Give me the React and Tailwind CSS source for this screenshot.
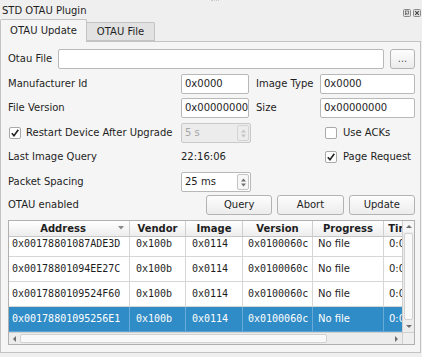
import React from "react";

const rows = [
  ["0x00178801087ADE3D", "0x100b", "0x0114", "0x0100060c", "No file", "0:00:00"],
  ["0x00178801094EE27C", "0x100b", "0x0114", "0x0100060c", "No file", "0:00:00"],
  ["0x0017880109524F60", "0x100b", "0x0114", "0x0100060c", "No file", "0:00:00"],
  ["0x00178801095256E1", "0x100b", "0x0114", "0x0100060c", "No file", "0:00:00"],
];

const colW = ["w-[121px]", "w-[56px]", "w-[57px]", "w-[70px]", "w-[71px]", "w-[36px]"];
const colPad = ["pl-[3px]", "pl-[6px]", "pl-[6px]", "pl-[5px]", "pl-[5px]", "pl-[5px]"];
const mono = [true, true, true, true, false, false];

const Input = ({ value, className = "" }) => (
  <div
    className={`h-[20px] bg-white border border-[#b8b8b8] rounded-[2px] px-[3px] flex items-center overflow-hidden whitespace-nowrap ${className}`}
  >
    {value}
  </div>
);

const Button = ({ children, className = "" }) => (
  <div
    className={`h-[20px] flex items-center justify-center border border-[#b3b3b3] rounded-[3px] bg-gradient-to-b from-[#fdfdfd] to-[#ececec] ${className}`}
  >
    {children}
  </div>
);

const Check = ({ checked }) => (
  <span className="w-[12px] h-[12px] bg-white border border-[#a9a9a9] rounded-[2px] flex items-center justify-center shrink-0">
    {checked && (
      <svg width="10" height="10" viewBox="0 0 10 10">
        <path d="M1.8 5.2 L4 7.8 L8.3 1.8" fill="none" stroke="#222" strokeWidth="1.6" />
      </svg>
    )}
  </span>
);

const Arrow = ({ dir, color = "#6e6e6e" }) => {
  const d = {
    up: "M0 4 L3 1 L6 4 Z",
    down: "M0 1 L3 4 L6 1 Z",
    left: "M4 0 L1 3 L4 6 Z",
    right: "M1 0 L4 3 L1 6 Z",
  }[dir];
  return (
    <svg width="6" height="6" viewBox="0 0 6 6">
      <path d={d} fill={color} />
    </svg>
  );
};

const Spin = ({ value, disabled }) => (
  <div
    className={`w-[70px] h-[20px] flex border rounded-[2px] ${
      disabled
        ? "border-[#c9c9c9] bg-[#ececec] text-[#a6a6a6]"
        : "border-[#b8b8b8] bg-white"
    }`}
  >
    <div className="flex-1 px-[3px] flex items-center whitespace-nowrap">{value}</div>
    <div
      className={`w-[12px] my-[1px] mr-[1px] flex flex-col items-center justify-center border rounded-[2px] ${
        disabled ? "border-[#d4d4d4]" : "border-[#c4c4c4] bg-[#f7f7f7]"
      }`}
    >
      <div className="h-[8px] flex items-end">
        <svg width="5" height="4" viewBox="0 0 5 4">
          <path d="M0 3.5 L2.5 0.5 L5 3.5 Z" fill={disabled ? "#c4c4c4" : "#707070"} />
        </svg>
      </div>
      <div className="h-[8px] flex items-start pt-[1px]">
        <svg width="5" height="4" viewBox="0 0 5 4">
          <path d="M0 0.5 L2.5 3.5 L5 0.5 Z" fill={disabled ? "#c4c4c4" : "#707070"} />
        </svg>
      </div>
    </div>
  </div>
);

const Table = () => (
  <div className="mt-[5px] h-[125px] border border-[#b0b0b0] bg-white flex flex-col">
    <div className="flex flex-1 min-h-0">
      <div className="flex-1 min-w-0 flex flex-col overflow-hidden">
        <div className="h-[16px] flex shrink-0 font-bold bg-gradient-to-b from-[#ffffff] to-[#ededed] border-b border-[#c6c6c6] whitespace-nowrap">
          <div className={`${colW[0]} shrink-0 relative flex items-center justify-center pr-[12px] border-r border-[#cfcfcf]`}>
            Address
            <span className="absolute right-[5px] top-[5px]">
              <svg width="6" height="4" viewBox="0 0 6 4">
                <path d="M0 0 L6 0 L3 3.5 Z" fill="#8a8a8a" />
              </svg>
            </span>
          </div>
          <div className={`${colW[1]} shrink-0 flex items-center justify-center border-r border-[#cfcfcf]`}>Vendor</div>
          <div className={`${colW[2]} shrink-0 flex items-center justify-center border-r border-[#cfcfcf]`}>Image</div>
          <div className={`${colW[3]} shrink-0 flex items-center justify-center border-r border-[#cfcfcf]`}>Version</div>
          <div className={`${colW[4]} shrink-0 flex items-center justify-center border-r border-[#cfcfcf]`}>Progress</div>
          <div className={`${colW[5]} shrink-0 flex items-center justify-center`}>Time</div>
        </div>
        <div className="flex-1 overflow-hidden">
          <div className="-mt-[5px]">
            {rows.map((r, i) => {
              const sel = i === 3;
              return (
                <div
                  key={i}
                  className={`h-[25px] flex whitespace-nowrap border-b ${
                    sel ? "bg-[#308cc6] text-white border-[#5fa5d3]" : "border-[#d6d6d6]"
                  }`}
                >
                  {r.map((c, j) => (
                    <div
                      key={j}
                      className={`${colW[j]} ${colPad[j]} shrink-0 flex items-center overflow-hidden border-r ${
                        sel ? "border-[#6aaad6]" : "border-[#d6d6d6]"
                      } ${mono[j] ? "font-['DejaVu_Sans_Mono',monospace]" : ""}`}
                    >
                      {c}
                    </div>
                  ))}
                </div>
              );
            })}
          </div>
        </div>
      </div>
      <div className="w-[12px] shrink-0 border-l border-[#cfcfcf] bg-[#ececec] flex flex-col">
        <div className="h-[11px] flex items-center justify-center bg-[#f6f6f6]">
          <Arrow dir="up" />
        </div>
        <div className="flex-1 mx-[1px] my-[1px] bg-[#f9f9f9] border border-[#d2d2d2] rounded-[2px]" />
        <div className="h-[11px] flex items-center justify-center">
          <Arrow dir="down" />
        </div>
      </div>
    </div>
    <div className="h-[12px] shrink-0 flex border-t border-[#cfcfcf]">
      <div className="flex-1 flex bg-[#ececec]">
        <div className="w-[11px] flex items-center justify-center">
          <Arrow dir="left" />
        </div>
        <div className="w-[307px] my-[1px] bg-[#f9f9f9] border border-[#d2d2d2] rounded-[2px]" />
        <div className="flex-1" />
        <div className="w-[11px] flex items-center justify-center">
          <Arrow dir="right" />
        </div>
      </div>
      <div className="w-[12px] border-l border-[#cfcfcf] bg-[#efefef]" />
    </div>
  </div>
);

export default function App() {
  return (
    <div className="w-[422px] h-[357px] bg-[#efefef] text-[#1e1e1e] text-[10px] leading-none font-['DejaVu_Sans',sans-serif] flex flex-col overflow-hidden">
      <div className="h-[19px] shrink-0 flex items-center pl-[2px] relative">
        <span className="pt-[3px]">STD OTAU Plugin</span>
        <div className="absolute top-0 left-[211px] w-[8px] border-t border-dotted border-[#c8c8c8]" />
        <div className="ml-auto flex gap-[2px] mt-[6px] mr-[1px]">
          <svg width="8" height="8" viewBox="0 0 8 8">
            <rect x="0.5" y="0.5" width="7" height="7" rx="1" fill="#e2e2e2" stroke="#8a8a8a" />
            <rect x="2.5" y="2" width="3" height="3" fill="none" stroke="#666" strokeWidth="0.8" />
            <path d="M4 4 L2 6" stroke="#666" strokeWidth="0.8" />
          </svg>
          <svg width="8" height="8" viewBox="0 0 8 8">
            <rect x="0.5" y="0.5" width="7" height="7" rx="1" fill="#e2e2e2" stroke="#8a8a8a" />
            <path d="M2.2 2.2 L5.8 5.8 M5.8 2.2 L2.2 5.8" stroke="#444" strokeWidth="1.1" />
          </svg>
        </div>
      </div>

      <div className="h-[22px] shrink-0 flex items-end relative z-10">
        <div className="w-[87px] h-[23px] flex items-center justify-center bg-[#f5f5f5] border border-b-0 border-[#c3c3c3] rounded-t-[2px] -mb-[1px]">
          OTAU Update
        </div>
        <div className="w-[68px] h-[19px] flex items-center justify-center bg-[#e2e2e2] border border-l-0 border-[#c3c3c3] rounded-tr-[2px]">
          OTAU File
        </div>
      </div>

      <div className="w-[421px] h-[312px] shrink-0 border border-[#c3c3c3] bg-[#f5f5f5] pl-[7px] pr-[5px] pt-[7px] flex flex-col">
        <div className="h-[20px] flex items-center">
          <span className="w-[50px]">Otau File</span>
          <Input value="" className="w-[326px]" />
          <Button className="ml-[6px] w-[25px] text-[#555]">...</Button>
        </div>

        <div className="mt-[5px] h-[20px] flex items-center">
          <span className="w-[173px]">Manufacturer Id</span>
          <Input value="0x0000" className="w-[68px]" />
          <span className="ml-[7px] w-[64px]">Image Type</span>
          <Input value="0x0000" className="flex-1" />
        </div>

        <div className="mt-[4px] h-[20px] flex items-center">
          <span className="w-[173px]">File Version</span>
          <Input value="0x00000000" className="w-[68px]" />
          <span className="ml-[7px] w-[64px]">Size</span>
          <Input value="0x00000000" className="flex-1" />
        </div>

        <div className="mt-[5px] h-[20px] flex items-center">
          <div className="w-[173px] flex items-center gap-[5px] pl-[1px]">
            <Check checked />
            <span>Restart Device After Upgrade</span>
          </div>
          <Spin value="5 s" disabled />
          <div className="ml-[74px] flex items-center gap-[6px]">
            <Check />
            <span>Use ACKs</span>
          </div>
        </div>

        <div className="mt-[4px] h-[20px] flex items-center">
          <span className="w-[173px]">Last Image Query</span>
          <span className="w-[70px]">22:16:06</span>
          <div className="ml-[74px] flex items-center gap-[6px]">
            <Check checked />
            <span>Page Request</span>
          </div>
        </div>

        <div className="mt-[5px] h-[20px] flex items-center">
          <span className="w-[173px]">Packet Spacing</span>
          <Spin value="25 ms" />
        </div>

        <div className="mt-[3px] h-[20px] flex items-center">
          <span className="w-[198px]">OTAU enabled</span>
          <div className="flex-1 flex gap-[5px]">
            <Button className="flex-1">Query</Button>
            <Button className="flex-1">Abort</Button>
            <Button className="flex-1">Update</Button>
          </div>
        </div>

        <Table />
      </div>
    </div>
  );
}
